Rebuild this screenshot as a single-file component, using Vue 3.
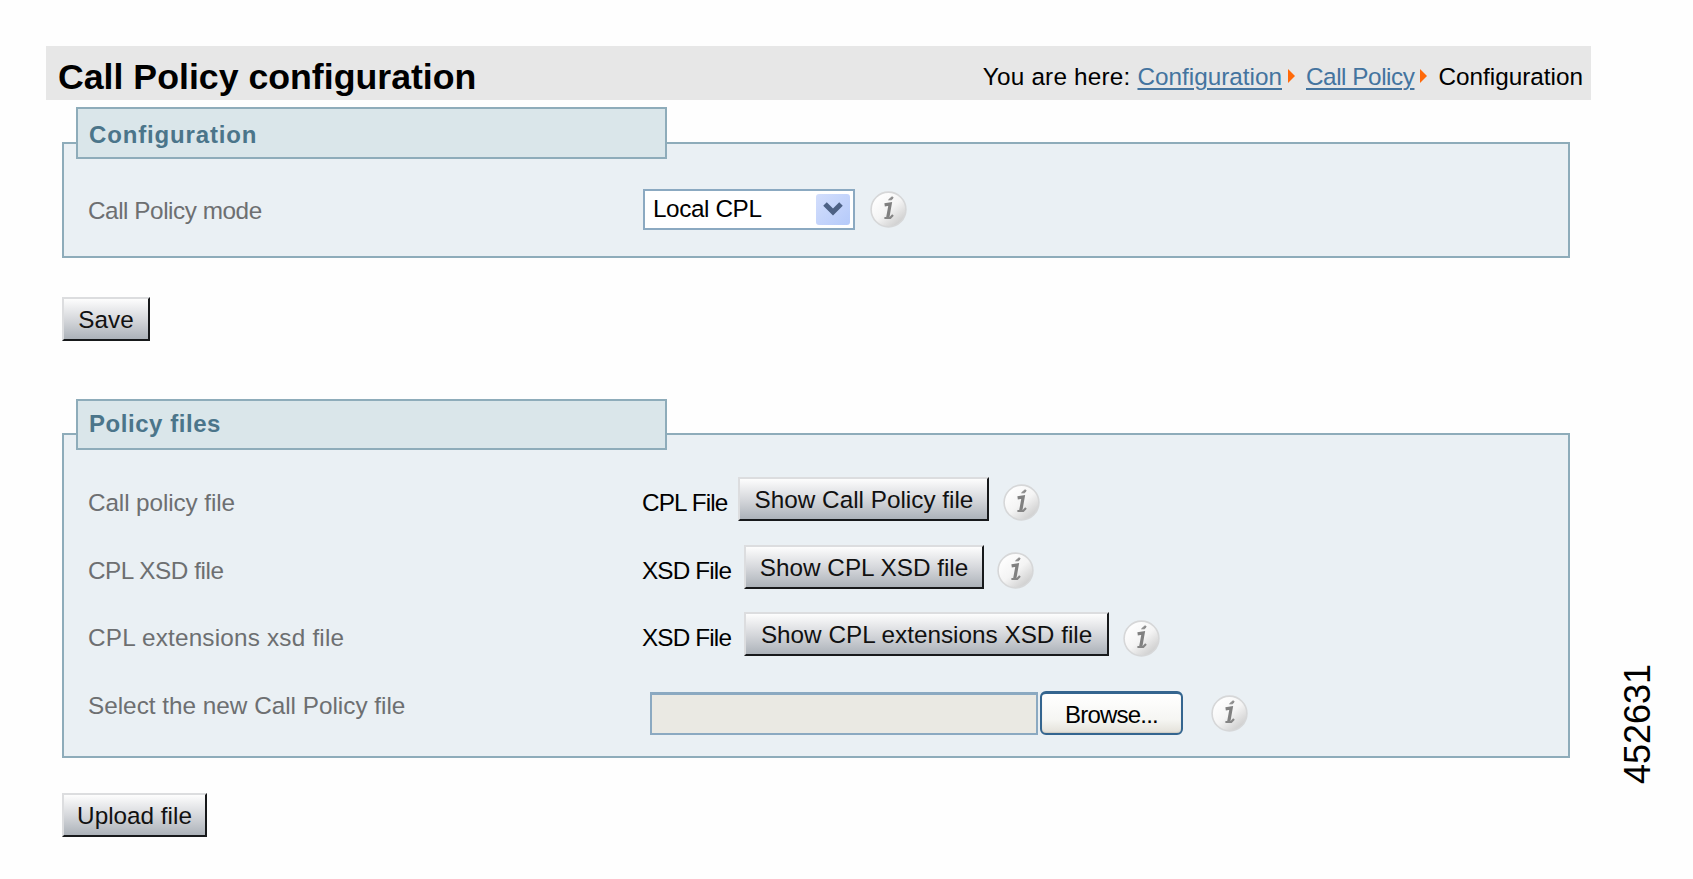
<script setup>
import { ref } from "vue";

const modes = ["Local CPL", "Policy service", "Off"];
const mode = ref("Local CPL");
const open = ref(false);

const files = [
  { label: "Call policy file", kind: "CPL File", action: "Show Call Policy file", size: "w-call" },
  { label: "CPL XSD file", kind: "XSD File", action: "Show CPL XSD file", size: "w-xsd" },
  { label: "CPL extensions xsd file", kind: "XSD File", action: "Show CPL extensions XSD file", size: "w-ext" }
];

function pick(name) {
  mode.value = name;
  open.value = false;
}
</script>

<template>
  <svg class="defs" width="0" height="0">
    <defs>
      <linearGradient id="ball" x1="0.15" y1="0.1" x2="0.85" y2="0.95">
        <stop offset="0" stop-color="#ffffff" />
        <stop offset="0.5" stop-color="#f4f4f4" />
        <stop offset="1" stop-color="#cacaca" />
      </linearGradient>
      <symbol id="info" viewBox="0 0 37 37">
        <circle cx="18.5" cy="18.5" r="17.4" fill="url(#ball)" stroke="#d6d7d8" stroke-width="1.6" />
        <path d="M18.6 8.8 L22 5.8 L23.2 6.6 L21.6 8.8 Z" fill="#8c8c8c" stroke="#8c8c8c" />
        <path
          d="M14.6 13.8 L20.2 13 L17.8 26.4"
          fill="none"
          stroke="#808080"
          stroke-width="3.2"
        />
        <path d="M14.4 27 L20.2 27 L23 24" fill="none" stroke="#858585" stroke-width="2.2" />
      </symbol>
    </defs>
  </svg>

  <div class="page">
    <main class="content">
      <header class="title-bar">
        <h1>Call Policy configuration</h1>
        <nav class="crumbs">
          <span class="here">You are here:</span>
          <a href="#">Configuration</a>
          <i class="arrow"></i>
          <a href="#" class="tight">Call Policy</a>
          <i class="arrow"></i>
          <span>Configuration</span>
        </nav>
      </header>

      <section class="panel panel-mode">
        <h2 class="legend legend-wide">Configuration</h2>
        <div class="row">
          <label>Call Policy mode</label>
          <div class="value value-mode">
            <div class="select" @click="open = !open">
              <span>{{ mode }}</span>
              <span class="drop">
                <svg width="20" height="16" viewBox="0 0 20 16">
                  <path d="M2 3 L10 11 L18 3" fill="none" stroke="#4d6185" stroke-width="5" />
                </svg>
              </span>
              <ul v-if="open" class="options">
                <li v-for="name in modes" :key="name" @click.stop="pick(name)">{{ name }}</li>
              </ul>
            </div>
            <svg class="info"><use href="#info" /></svg>
          </div>
        </div>
      </section>

      <button class="btn w-save">Save</button>

      <section class="panel panel-files">
        <h2 class="legend">Policy files</h2>
        <div class="rows">
          <div v-for="file in files" :key="file.label" class="row" :class="file.size">
            <label>{{ file.label }}</label>
            <div class="value">
              <span class="kind">{{ file.kind }}</span>
              <button class="btn btn-show">{{ file.action }}</button>
              <svg class="info"><use href="#info" /></svg>
            </div>
          </div>
          <div class="row">
            <label>Select the new Call Policy file</label>
            <div class="value value-upload">
              <div class="file-name"></div>
              <button class="browse">Browse...</button>
              <svg class="info"><use href="#info" /></svg>
            </div>
          </div>
        </div>
      </section>

      <button class="btn w-upload">Upload file</button>
    </main>
    <aside class="figure-id">452631</aside>
  </div>
</template>

<style>
body {
  background: #fefefe;
}
</style>

<style scoped>
.defs {
  display: block;
}

.page {
  display: flex;
  box-sizing: border-box;
  width: 1693px;
  height: 879px;
  padding: 46px 0 0 46px;
  overflow: hidden;
  font-family: "Liberation Sans", Arial, sans-serif;
  font-size: 24.3px;
  line-height: 28px;
  color: #000;
}

.content {
  width: 1545px;
}

.title-bar {
  display: flex;
  align-items: center;
  justify-content: space-between;
  height: 54px;
  padding: 0 8px 0 12px;
  box-sizing: border-box;
  background: #e7e7e7;
}

h1 {
  margin: 7px 0 0;
  font-size: 35.7px;
  line-height: 40px;
}

.crumbs {
  display: flex;
  align-items: center;
  padding-top: 7px;
  white-space: nowrap;
}

.crumbs .here {
  letter-spacing: 0.2px;
}

.crumbs a {
  margin-left: 7px;
  color: #44749f;
  text-decoration-thickness: 2px;
  text-underline-offset: 3px;
}

.crumbs .tight {
  margin-left: 8px;
  letter-spacing: -0.45px;
}

.arrow {
  margin: 0 3px 2px 6px;
  border: 7px solid transparent;
  border-left-color: #ff6a0a;
  border-right-width: 0;
}

.arrow + span {
  margin-left: 8px;
}

.panel {
  box-sizing: border-box;
  width: 1508px;
  margin-left: 16px;
  border: 2px solid #8eacba;
  background: #eaf0f4;
}

.panel-mode {
  height: 116px;
  margin-top: 42px;
}

.panel-files {
  height: 325px;
  margin-top: 92px;
}

.legend {
  box-sizing: border-box;
  width: 591px;
  height: 51px;
  margin: -36px 0 0 12px;
  padding: 9px 0 0 11px;
  border: 2px solid #8eacba;
  background: #dae6ea;
  color: #4b758a;
  font-size: 24px;
  line-height: 28px;
  letter-spacing: 0.55px;
}

.legend-wide {
  height: 52px;
  margin-top: -37px;
  padding-top: 12px;
  letter-spacing: 0.85px;
}

.rows {
  padding-top: 19px;
}

.row {
  display: grid;
  grid-template-columns: 554px 1fr;
  align-items: center;
  height: 67.7px;
  padding-left: 24px;
}

.panel-mode .row {
  height: 104px;
}

.row label {
  color: #6d6f71;
}

.panel-mode label,
.w-xsd label {
  letter-spacing: -0.45px;
}

.w-call label {
  letter-spacing: -0.1px;
}

.w-ext label {
  letter-spacing: 0.2px;
}

.value {
  display: flex;
  align-items: center;
}

.kind {
  letter-spacing: -0.85px;
}

.value-mode {
  margin: 0 0 4px 1px;
}

.value-upload {
  padding: 15px 0 0 8px;
}

.info {
  flex: none;
  width: 37px;
  height: 37px;
  margin-left: 13px;
}

.value-mode .info {
  margin-left: 15px;
}

.select {
  position: relative;
  display: flex;
  align-items: center;
  justify-content: space-between;
  box-sizing: border-box;
  width: 212px;
  height: 41px;
  padding: 0 3px 0 8px;
  border: 2px solid #8ba9c1;
  background: #fff;
  letter-spacing: -0.4px;
}

.drop {
  display: flex;
  align-items: center;
  justify-content: center;
  width: 34px;
  height: 31px;
  border-radius: 3px;
  background: linear-gradient(135deg, #d3defc, #b5cafa);
}

.options {
  position: absolute;
  top: 39px;
  left: -2px;
  width: 208px;
  margin: 0;
  padding: 0;
  border: 2px solid #8ba9c1;
  background: #fff;
  list-style: none;
}

.options li {
  padding: 4px 8px;
}

.btn {
  box-sizing: border-box;
  height: 44px;
  padding: 2px 0 0;
  border: 2px solid #dcdddf;
  border-right-color: #17191b;
  border-bottom-color: #17191b;
  background: linear-gradient(#fdfdfd, #d5d7db 52%, #acb2b9);
  color: #111;
  font: inherit;
  white-space: nowrap;
}

.content > .btn {
  display: block;
  margin: 39px 0 0 16px;
}

.content > .w-save {
  width: 88px;
}

.content > .w-upload {
  width: 145px;
  margin-top: 35px;
}

.btn-show {
  margin: 0 0 8px 13px;
}

.w-call .btn {
  width: 251px;
  margin-left: 11px;
}

.w-call .info {
  margin-left: 14px;
}

.w-xsd .btn {
  width: 240px;
}

.w-ext .btn {
  width: 365px;
}

.w-ext .info {
  margin-left: 14px;
}

.file-name {
  box-sizing: border-box;
  width: 388px;
  height: 43px;
  border: 2px solid #8ba9c1;
  border-top-width: 3px;
  background: #eae9e3;
}

.browse {
  box-sizing: border-box;
  width: 143px;
  height: 44px;
  margin-left: 2px;
  padding: 2px 0 0;
  border: 2px solid #34658f;
  border-top-width: 3px;
  border-radius: 6px;
  background: linear-gradient(#fff, #f6f6f3 65%, #e3e1d9);
  box-shadow: inset 0 -1px 1px #cfccc2;
  font: inherit;
  font-size: 24px;
  letter-spacing: -0.8px;
}

.value-upload .info {
  margin-left: 28px;
}

.figure-id {
  margin: 614px 0 0 21px;
  height: 124px;
  font-size: 36px;
  line-height: 52px;
  writing-mode: vertical-rl;
  transform: rotate(180deg);
}
</style>
